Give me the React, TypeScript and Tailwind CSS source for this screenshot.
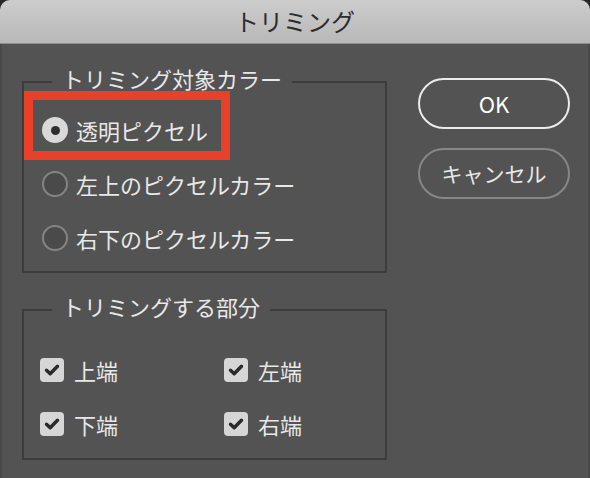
import React from 'react';

const RadioDot = ({ checked }: { checked: boolean }) =>
  checked ? (
    <span className="flex h-[26px] w-[26px] shrink-0 items-center justify-center rounded-full bg-[#d9d9d9]">
      <span className="h-[9px] w-[9px] rounded-full bg-[#2e2e2e]" />
    </span>
  ) : (
    <span className="h-[26px] w-[26px] shrink-0 rounded-full border-2 border-[#848484] bg-[#4a4a4a]" />
  );

const CheckBox = ({ label }: { label: string }) => (
  <div className="flex h-[24px] items-center gap-[10px]">
    <span className="flex h-[24px] w-[24px] items-center justify-center rounded-[4px] bg-[#d6d6d6]">
      <svg width="16" height="16" viewBox="0 0 16 16" fill="none">
        <path d="M2.5 8.2 L6.2 11.8 L13.5 4.2" stroke="#2a2a2a" strokeWidth="3.4" strokeLinecap="round" strokeLinejoin="round" />
      </svg>
    </span>
    <span>{label}</span>
  </div>
);

// header row of a group box: line — label — line
const GroupHeader = ({ title }: { title: string }) => (
  <div className="flex h-[25px]">
    <div className="mt-[15px] w-[30px] border-l-2 border-t-2 border-[#3c3c3c]" />
    <span className="px-[10px] leading-[24px]">{title}</span>
    <div className="mt-[15px] flex-1 border-r-2 border-t-2 border-[#3c3c3c]" />
  </div>
);

export default function App() {
  return (
    <div className="h-[478px] w-[590px] bg-[#262626] font-['Noto_Sans_CJK_JP','Noto_Sans',sans-serif] text-[22px] text-[#e8e8e8]">
      <div className="flex h-full flex-col overflow-hidden rounded-t-[10px] bg-[#535353]">
        {/* Title bar */}
        <div className="flex h-[44px] items-center justify-center border-b border-[#8e8e8e] bg-linear-to-b from-[#cdcdcd] to-[#b8b8b8] pb-[1px] text-[24px] text-[#2c2c2c]">
          トリミング
        </div>

        <div className="flex flex-1 border-x-2 border-[#4a4a4a] pl-[20px] pr-[18px]">
          {/* Left column */}
          <div className="flex w-[365px] flex-col pt-[22px]">
            {/* トリミング対象カラー */}
            <div className="flex flex-col">
              <GroupHeader title="トリミング対象カラー" />
              <div className="flex flex-col border-x-2 border-b-2 border-[#3c3c3c] pb-[20px]">
                <div className="w-[206px] border-[9px] border-[#e9402a] pb-[8px] pl-[9px] pt-[17px]">
                  <div className="flex h-[26px] items-center gap-[8px]">
                    <RadioDot checked />
                    <span>透明ピクセル</span>
                  </div>
                </div>
                <div className="ml-[18px] mt-[11px] flex h-[26px] items-center gap-[8px]">
                  <RadioDot checked={false} />
                  <span>左上のピクセルカラー</span>
                </div>
                <div className="ml-[18px] mt-[28px] flex h-[26px] items-center gap-[8px]">
                  <RadioDot checked={false} />
                  <span>右下のピクセルカラー</span>
                </div>
              </div>
            </div>

            {/* トリミングする部分 */}
            <div className="mt-[21px] flex flex-col">
              <GroupHeader title="トリミングする部分" />
              <div className="grid grid-cols-[184px_1fr] gap-y-[30px] border-x-2 border-b-2 border-[#3c3c3c] pb-[22px] pl-[16px] pt-[39px]">
                <CheckBox label="上端" />
                <CheckBox label="左端" />
                <CheckBox label="下端" />
                <CheckBox label="右端" />
              </div>
            </div>
          </div>

          {/* Buttons */}
          <div className="ml-auto flex w-[152px] flex-col gap-[19px] pt-[34px]">
            <button className="h-[51px] rounded-full border-2 border-[#ececec] text-[22px] text-white">
              OK
            </button>
            <button className="h-[51px] rounded-full border-2 border-[#878787] text-[21px] text-[#e8e8e8]">
              キャンセル
            </button>
          </div>
        </div>
      </div>
    </div>
  );
}
